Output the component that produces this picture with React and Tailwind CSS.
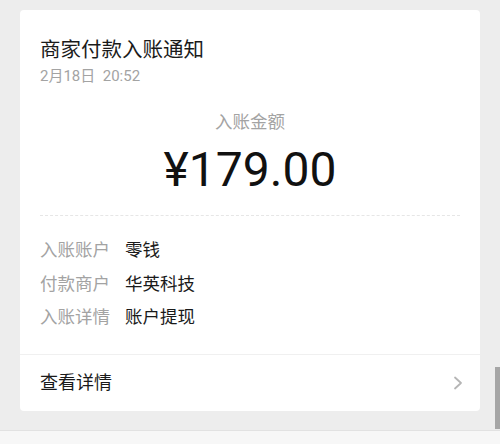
export default function App() {
  const rows = [
    ["入账账户", "零钱"],
    ["付款商户", "华英科技"],
    ["入账详情", "账户提现"],
  ];

  return (
    <div
      className="relative flex h-[444px] w-[500px] flex-col overflow-hidden bg-[#ededed]"
      style={{ fontFamily: 'Roboto, "Noto Sans CJK SC", sans-serif' }}
    >
      <div className="mx-5 mt-[10px] rounded-[4px] bg-white">
        <div className="px-5 pt-[26px] pb-[19px]">
          <div className="text-[20.5px] leading-[28px] text-[#1a1a1a]">商家付款入账通知</div>
          <div className="mt-[2px] text-[15px] leading-[20px] text-[#a3a3a3]">2月18日&nbsp;&nbsp;20:52</div>

          <div className="mt-[24px] text-center text-[17.5px] leading-[24px] text-[#a3a3a3]">入账金额</div>
          <div className="mt-[8px] text-center text-[48px] leading-[56px] text-[#111]">¥179.00</div>

          <div className="mt-[17px] border-t border-dashed border-[#e6e6e6]" />

          <div className="pt-[18px]">
            {rows.map(([label, value]) => (
              <div key={label} className="flex text-[17.5px] leading-[33.5px]">
                <span className="w-[85px] text-[#a3a3a3]">{label}</span>
                <span className="text-[#1a1a1a]">{value}</span>
              </div>
            ))}
          </div>
        </div>

        <div className="flex h-[57px] items-center justify-between border-t border-[#f0f0f0] pl-5 pr-[17px]">
          <span className="text-[18px] text-[#1a1a1a]">查看详情</span>
          <svg width="10" height="14" viewBox="0 0 10 14" fill="none">
            <polyline points="2,1.5 8,7 2,12.5" stroke="#b5b5b5" strokeWidth="1.8" strokeLinecap="round" strokeLinejoin="round" />
          </svg>
        </div>
      </div>

      <div className="mt-auto h-[14px] border-t border-[#e2e2e2] bg-[#f7f7f7]" />

      <div className="absolute right-0 top-[367px] h-[62px] w-[5px] bg-[#a6a6a6]" />
    </div>
  );
}
